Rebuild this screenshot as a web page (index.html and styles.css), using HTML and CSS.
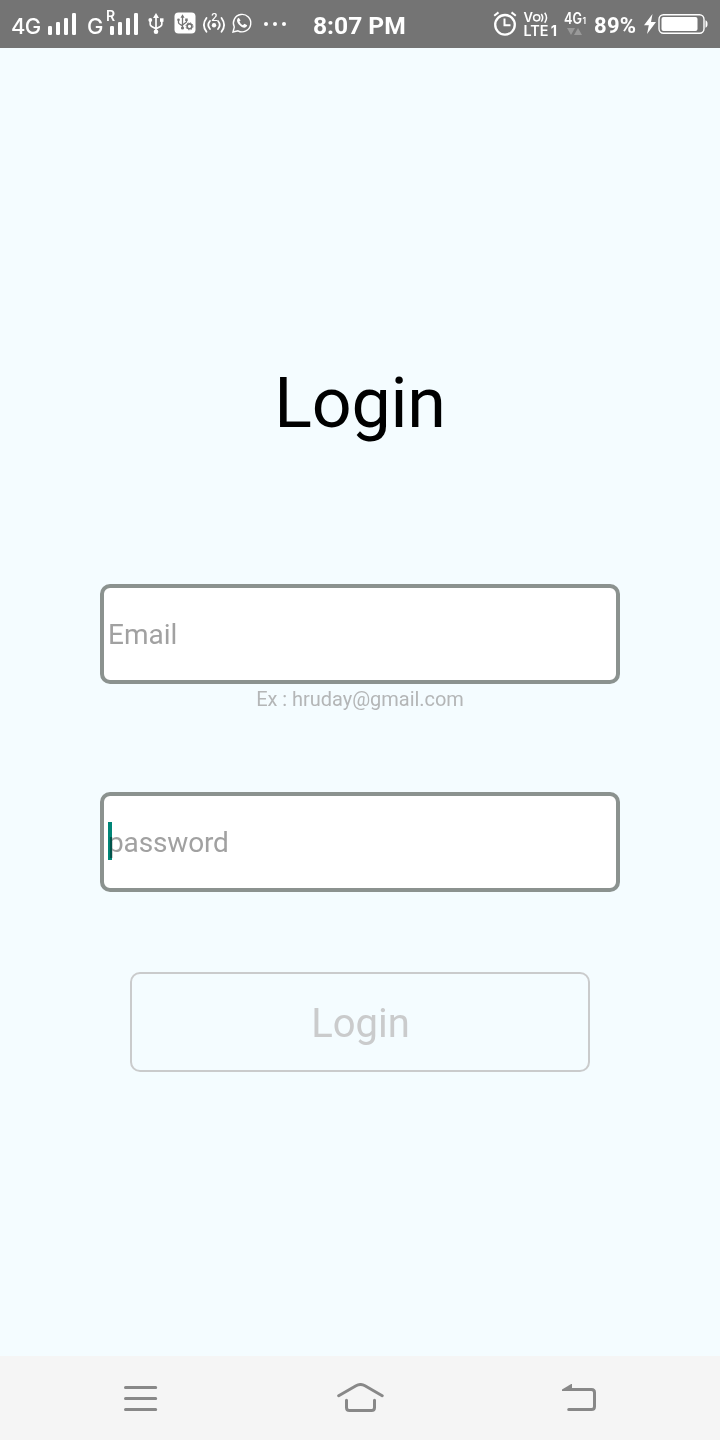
FILE: index.html
```html
<!DOCTYPE html>
<html lang="en">
<head>
<meta charset="utf-8">
<title>Login</title>
<link rel="stylesheet" href="styles.css">
</head>
<body>
<div class="screen">
  <header class="status">
    <span class="net net-4g">4G</span>
    <svg class="bars" width="28" height="24" viewBox="0 0 28 24"><g fill="#fff"><rect x="0" y="14" width="4" height="9" rx="1.3"/><rect x="8" y="10" width="4" height="13" rx="1.3"/><rect x="16" y="6" width="4" height="17" rx="1.3"/><rect x="24" y="1" width="4" height="22" rx="1.3"/></g></svg>
    <span class="net net-g">G</span>
    <div class="roam"><span class="roam-r">R</span>
      <svg class="bars" width="28" height="24" viewBox="0 0 28 24"><g fill="#fff"><rect x="0" y="14" width="4" height="9" rx="1.3"/><rect x="8" y="10" width="4" height="13" rx="1.3"/><rect x="16" y="6" width="4" height="17" rx="1.3"/><rect x="24" y="1" width="4" height="22" rx="1.3"/></g></svg>
    </div>
    <svg class="usb" width="16" height="22" viewBox="0 0 16 22"><g fill="none" stroke="#fff" stroke-width="1.7"><path d="M8 3v16M2.2 8v3.2q0 1.6 1.5 2.2L8 15.7M13.8 8v3.2q0 1.6-1.5 2.2L8 15.7"/></g><g fill="#fff"><path d="M8 0l3 5H5z"/><circle cx="2.3" cy="7" r="1.9"/><rect x="12" y="5.3" width="3.5" height="3.5"/><circle cx="8" cy="18.8" r="2.3"/></g></svg>
    <svg class="usbset" width="22" height="22" viewBox="0 0 22 22"><rect x="0.5" y="0.5" width="21" height="21" rx="4" fill="#fff"/><g fill="none" stroke="#747474" stroke-width="1.3"><path d="M8.5 4v12M4.5 8v2.5q0 1.3 4 3.3M12.5 8v2L8.5 13"/><circle cx="15.5" cy="14.3" r="2.4" stroke-width="1.6"/><circle cx="15.5" cy="14.3" r="3.5" stroke-width="1" stroke-dasharray="1.3 1.45"/></g><g fill="#747474"><path d="M8.5 2.2l2 3.5h-4z"/><circle cx="4.5" cy="7.7" r="1.3"/><rect x="11.2" y="6.5" width="2.5" height="2.5"/><circle cx="8.5" cy="16" r="1.6"/></g></svg>
    <svg class="hotspot" width="22" height="22" viewBox="0 0 22 22"><g fill="none" stroke="#fff" stroke-width="1.8" stroke-linecap="round"><path d="M3.5 5Q-1.7 12 3.5 18.7M18.5 5Q23.7 12 18.5 18.7M7 8Q3.5 12 7 16M15 8Q18.5 12 15 16"/></g><circle cx="11" cy="12.3" r="2.2" fill="#fff"/><text x="11.5" y="8.4" class="tiny" text-anchor="middle">2</text></svg>
    <svg class="chat" width="20" height="20" viewBox="0 0 20 20"><path d="M1 19l1.3-5A8.7 8.7 0 1 1 6 17.8z" fill="none" stroke="#fff" stroke-width="1.4"/><path d="M6.8 4.7Q5 5.5 5 7.5c0 2.5 4 7.2 7.5 7.2q2.2-.2 2.7-2.5l-2.8-1.5-1.5 1.5Q8.2 11 7.4 8.6l1.2-1.2z" fill="#fff"/></svg>
    <svg class="dots" width="22" height="4" viewBox="0 0 22 4"><g fill="#fff"><circle cx="2" cy="2" r="2"/><circle cx="11" cy="2" r="2"/><circle cx="20" cy="2" r="2"/></g></svg>
    <span class="time">8:07 PM</span>
    <svg class="alarm" width="24" height="26" viewBox="0 0 24 26"><g fill="none" stroke="#fff"><circle cx="12" cy="13.8" r="9.8" stroke-width="2.3"/><path d="M11.5 7.5v6.8h6" stroke-width="2"/><path d="M1.2 4.7l4.3-3.3M22.8 4.7l-4.3-3.3" stroke-width="2"/></g></svg>
    <svg class="volte" width="36" height="28" viewBox="0 0 36 28"><g class="cell"><text x="0.5" y="11.5" font-size="13" font-weight="600" textLength="9.5" lengthAdjust="spacingAndGlyphs">V</text><text x="0.5" y="25.5" font-size="14.5" font-weight="600" textLength="25" lengthAdjust="spacingAndGlyphs">LTE</text><text x="27.7" y="25.5" font-size="14.5" font-weight="700">1</text></g><g fill="none" stroke="#fff" stroke-width="1.5"><circle cx="13.7" cy="7.8" r="3.1"/><path d="M18.3 4Q21 7.8 18.3 11.6M21.7 2.8Q25.3 7.8 21.7 12.8"/></g></svg>
    <svg class="data" width="22" height="26" viewBox="0 0 22 26"><g class="cell"><text x="0" y="13.2" font-size="15.5" font-weight="600" textLength="18" lengthAdjust="spacingAndGlyphs">4G</text><text x="18.6" y="13.2" font-size="8.5" font-weight="600">1</text></g><path d="M3 17h8l-4 7zM10 24h8l-4-7z" fill="#999"/></svg>
    <span class="percent">89%</span>
    <svg class="power" width="65" height="22" viewBox="0 0 65 22"><path d="M9.5 1L1 12.3h4.8L4 21l9-12H8z" fill="#fff"/><rect x="16" y="1.7" width="45" height="18.6" rx="4.5" fill="none" stroke="#fff" stroke-width="1.4"/><rect x="18.5" y="4" width="36" height="14" rx="2" fill="#fff"/><path d="M62.5 7.2q2 .5 2 3.8t-2 3.8z" fill="#fff"/></svg>
  </header>

  <main class="content">
    <h1 class="title">Login</h1>
    <div class="field"><span class="placeholder">Email</span></div>
    <p class="hint">Ex : hruday@gmail.com</p>
    <div class="field field-password"><span class="placeholder">password</span><i class="caret"></i></div>
    <div class="button">Login</div>
  </main>

  <nav class="navbar">
    <svg width="34" height="26" viewBox="0 0 34 26"><path d="M1.5 2.5h30.2M1.5 13.5h30.2M1.5 24.5h30.2" class="line"/></svg>
    <svg width="48" height="30" viewBox="0 0 48 30"><path d="M2.7 12.7L20 2.7q4.5-2.4 9 0l17.2 10M10.5 17.3v7.3q0 3 3 3h22q3 0 3-3v-7.3" class="line"/></svg>
    <svg width="36" height="28" viewBox="0 0 36 28"><path d="M8 5.5h22.5q3 0 3 3v14q0 3-3 3H7.7" class="line"/><path d="M1 7V5.5L10.2 0h.8v7z" fill="#888"/></svg>
  </nav>
</div>
</body>
</html>
```
FILE: styles.css
```css
* { box-sizing: border-box; }

body {
  margin: 0;
  font-family: Roboto, "Noto Sans", sans-serif;
}

.screen {
  display: flex;
  flex-direction: column;
  width: 720px;
  height: 1440px;
  background: #f4fcff;
}

.status {
  display: flex;
  align-items: flex-start;
  height: 48px;
  padding-left: 11px;
  background: #747474;
  color: #fff;
  white-space: nowrap;
}

.status > *,
.roam svg { flex: none; display: block; overflow: visible; }

.net {
  margin-top: 13px;
  font: 500 22px/26px Inter, sans-serif;
  letter-spacing: -0.7px;
}

.net-4g { width: 37px; }
.net-g { width: 22px; margin-left: 11px; }
.bars { margin-top: 12px; }
.roam { position: relative; width: 28px; margin-left: 1px; }

.roam-r {
  position: absolute;
  left: -4px;
  top: 9px;
  font: 600 14px/14px Inter, sans-serif;
}

.usb { margin: 13px 0 0 10px; }
.usbset { margin: 12px 0 0 10px; }
.hotspot { margin: 13px 0 0 7px; }
.tiny { font: 500 11px Roboto, sans-serif; fill: #fff; }
.chat { margin: 13px 0 0 7px; }
.dots { margin: 22px 0 0 12px; }

.time {
  width: 94px;
  margin: 11px 0 0 27px;
  font: 700 24.6px/30px Roboto, sans-serif;
}

.alarm { margin: 11px 0 0 86px; }
.volte { margin: 10px 0 0 6px; }
.data { margin: 11px 0 0 5px; }
.cell { font-family: Inter, sans-serif; font-weight: 500; fill: #fff; }

.percent {
  width: 43px;
  margin: 11px 0 0 8px;
  font: 700 22px/30px Roboto, sans-serif;
  letter-spacing: 0.3px;
}

.power { margin: 13px 0 0 6px; }

.content {
  display: flex;
  flex: 1;
  flex-direction: column;
  align-items: center;
}

.title {
  margin: 314px 0 0;
  color: #000;
  font-size: 70px;
  font-weight: 400;
  line-height: 82px;
  letter-spacing: -0.2px;
}

.field {
  position: relative;
  display: flex;
  align-items: center;
  width: 520px;
  height: 100px;
  margin-top: 140px;
  padding: 2px 0 0 4px;
  border: 4px solid #8b928f;
  border-radius: 10px;
  background: #fff;
}

.placeholder {
  color: #a1a1a1;
  font-size: 28px;
  line-height: 34px;
}

.caret {
  position: absolute;
  left: 4px;
  top: 26px;
  width: 4px;
  height: 38px;
  background: #008577;
  mix-blend-mode: multiply;
}

.hint {
  margin: 3px 0 0;
  color: #b4b6b7;
  font-size: 20px;
  line-height: 24px;
  letter-spacing: -0.03px;
}

.field-password { margin-top: 81px; }
.field-password .placeholder { letter-spacing: -0.15px; }

.button {
  width: 460px;
  height: 100px;
  margin-top: 80px;
  padding-left: 1px;
  border: 2px solid #cacbcc;
  border-radius: 10px;
  color: #cacbcc;
  font-size: 40px;
  line-height: 99px;
  text-align: center;
}

.navbar {
  display: flex;
  flex: none;
  align-items: center;
  justify-content: space-between;
  height: 84px;
  padding: 0 123px 0 124px;
  background: #f5f5f5;
}

.line {
  fill: none;
  stroke: #888;
  stroke-width: 3;
  stroke-linecap: round;
}
```
